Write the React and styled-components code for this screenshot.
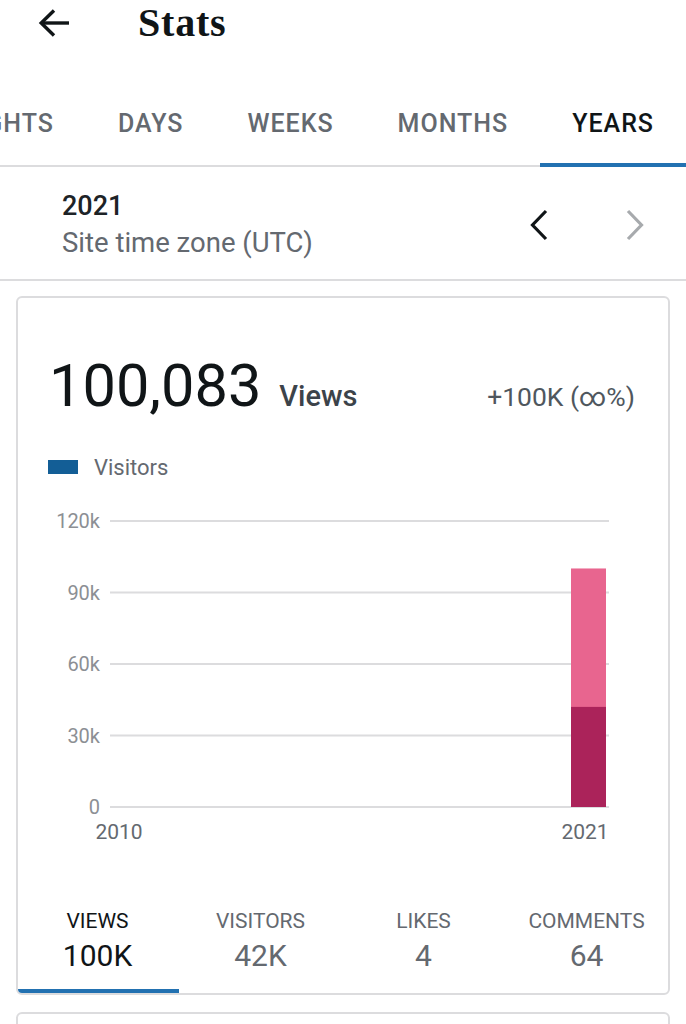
import React from "react";
import styled, { createGlobalStyle } from "styled-components";

const Global = createGlobalStyle`
  html, body { margin: 0; padding: 0; background: #fff; }
  body { font-family: Roboto, "Noto Sans", sans-serif; color: #101517; }
  * { box-sizing: border-box; }
`;

const Page = styled.div`
  width: 686px;
  overflow: hidden;
`;

const Header = styled.header`
  display: flex;
  align-items: center;
  height: 46px;
  padding-left: 38px;
  margin-bottom: 33px;
`;

const BackButton = styled.div`
  display: flex;
  width: 32px;
  height: 30px;
  margin-right: 68px;
`;

const Title = styled.h1`
  margin: 0;
  font-family: "Liberation Serif", "DejaVu Serif", serif;
  font-weight: 700;
  font-size: 40px;
  line-height: 46px;
  letter-spacing: 0.8px;
`;

const TabBar = styled.nav`
  display: flex;
  justify-content: flex-end;
  overflow: hidden;
  box-shadow: inset 0 -2px 0 #dcdcde;
`;

const Tab = styled.div`
  flex-shrink: 0;
  height: 88px;
  padding: 4px 32px 0;
  display: flex;
  align-items: center;
  font-size: 25px;
  font-weight: 500;
  letter-spacing: 1px;
  text-transform: uppercase;
  color: ${(p) => (p.$active ? "#101517" : "#646970")};
  border-bottom: 4px solid ${(p) => (p.$active ? "#2271b1" : "transparent")};
`;

const DateRow = styled.section`
  display: flex;
  align-items: center;
  justify-content: space-between;
  padding: 23px 27px 20px 62px;
  border-bottom: 2px solid #dcdcde;
`;

const DateText = styled.div`
  display: flex;
  flex-direction: column;
`;

const Period = styled.div`
  font-size: 27px;
  line-height: 32px;
  font-weight: 500;
  color: #1d2327;
`;

const Zone = styled.div`
  font-size: 27.5px;
  line-height: 32px;
  margin-top: 5px;
  color: #646970;
`;

const Arrows = styled.div`
  display: flex;
  gap: 48px;
`;

const ArrowButton = styled.div`
  width: 48px;
  height: 48px;
  display: flex;
  align-items: center;
  justify-content: center;
  color: ${(p) => (p.$disabled ? "#a7aaad" : "#101517")};
`;

const Card = styled.div`
  margin: 15px 16px 0;
  border: 2px solid #dcdcde;
  border-radius: 6px;
  overflow: hidden;
`;

const NextCard = styled(Card)`
  margin-top: 17px;
  height: 40px;
`;

const Summary = styled.div`
  display: flex;
  align-items: baseline;
  padding: 54px 33px 0 31px;
`;

const BigNumber = styled.span`
  font-size: 59.5px;
  line-height: 68px;
  color: #101517;
`;

const Unit = styled.span`
  font-size: 29px;
  font-weight: 500;
  margin-left: 18px;
  color: #3c434a;
`;

const Change = styled.span`
  margin-left: auto;
  font-size: 26.5px;
  color: #50575e;
`;

const Legend = styled.div`
  display: flex;
  align-items: center;
  gap: 16px;
  height: 26px;
  margin: 34px 0 21px 30px;
  font-size: 22px;
  color: #646970;
`;

const Swatch = styled.span`
  width: 30px;
  height: 14px;
  background: #135e96;
`;

const Chart = styled.svg`
  display: block;
  font-family: Roboto, sans-serif;
`;

const StatTabs = styled.div`
  display: grid;
  grid-template-columns: repeat(4, 1fr);
  margin-left: -2px;
`;

const StatTab = styled.div`
  display: flex;
  flex-direction: column;
  align-items: center;
  padding: 57px 0 15px;
  border-bottom: 4px solid ${(p) => (p.$active ? "#2271b1" : "transparent")};
  color: ${(p) => (p.$active ? "#101517" : "#646970")};
`;

const StatLabel = styled.div`
  font-size: 21px;
  line-height: 26px;
  text-transform: uppercase;
`;

const StatValue = styled.div`
  font-size: 30px;
  line-height: 36px;
  margin-top: 4px;
`;

const BackIcon = () => (
  <svg width="32" height="30" viewBox="0 0 32 30" fill="none" stroke="currentColor" strokeWidth="3.4">
    <path d="M3 15 H31" />
    <path d="M16 2.5 L3.2 15 L16 27.5" strokeLinejoin="miter" />
  </svg>
);

const Chevron = ({ dir }) => (
  <svg width="20" height="32" viewBox="0 0 20 32" fill="none" stroke="currentColor" strokeWidth="3.2">
    {dir === "left" ? <path d="M17 2 L3.5 16 L17 30" /> : <path d="M3 2 L16.5 16 L3 30" />}
  </svg>
);

const ticks = [
  { label: "120k", y: 20 },
  { label: "90k", y: 91.5 },
  { label: "60k", y: 163 },
  { label: "30k", y: 234.5 },
  { label: "0", y: 306 },
];

const tabs = ["Insights", "Days", "Weeks", "Months", "Years"];
const stats = [
  { label: "Views", value: "100K", active: true },
  { label: "Visitors", value: "42K" },
  { label: "Likes", value: "4" },
  { label: "Comments", value: "64" },
];

export default function App() {
  const total = 100083;
  const visitors = 42000;
  const max = 120000;
  const h = 286;
  const base = 306;
  const viewsH = (total / max) * h;
  const visH = (visitors / max) * h;
  return (
    <Page>
      <Global />
      <Header>
        <BackButton>
          <BackIcon />
        </BackButton>
        <Title>Stats</Title>
      </Header>
      <TabBar>
        {tabs.map((t) => (
          <Tab key={t} $active={t === "Years"}>
            {t}
          </Tab>
        ))}
      </TabBar>
      <DateRow>
        <DateText>
          <Period>2021</Period>
          <Zone>Site time zone (UTC)</Zone>
        </DateText>
        <Arrows>
          <ArrowButton>
            <Chevron dir="left" />
          </ArrowButton>
          <ArrowButton $disabled>
            <Chevron dir="right" />
          </ArrowButton>
        </Arrows>
      </DateRow>
      <Card>
        <Summary>
          <BigNumber>100,083</BigNumber>
          <Unit>Views</Unit>
          <Change>+100K (∞%)</Change>
        </Summary>
        <Legend>
          <Swatch />
          Visitors
        </Legend>
        <Chart width="650" height="350" viewBox="0 0 650 350">
          {ticks.map((t) => (
            <g key={t.label}>
              <line x1="92" x2="591" y1={t.y} y2={t.y} stroke="#dcdcde" strokeWidth="2" />
              <text x="82" y={t.y + 7} textAnchor="end" fontSize="20" fill="#8c8f94">
                {t.label}
              </text>
            </g>
          ))}
          <rect x="553" y={base - viewsH} width="35" height={viewsH} fill="#e8658f" />
          <rect x="553" y={base - visH} width="35" height={visH} fill="#ab235a" />
          <text x="101" y="338" textAnchor="middle" fontSize="21" fill="#646970">2010</text>
          <text x="567" y="338" textAnchor="middle" fontSize="21" fill="#646970">2021</text>
        </Chart>
        <StatTabs>
          {stats.map((s) => (
            <StatTab key={s.label} $active={s.active}>
              <StatLabel>{s.label}</StatLabel>
              <StatValue>{s.value}</StatValue>
            </StatTab>
          ))}
        </StatTabs>
      </Card>
      <NextCard />
    </Page>
  );
}
